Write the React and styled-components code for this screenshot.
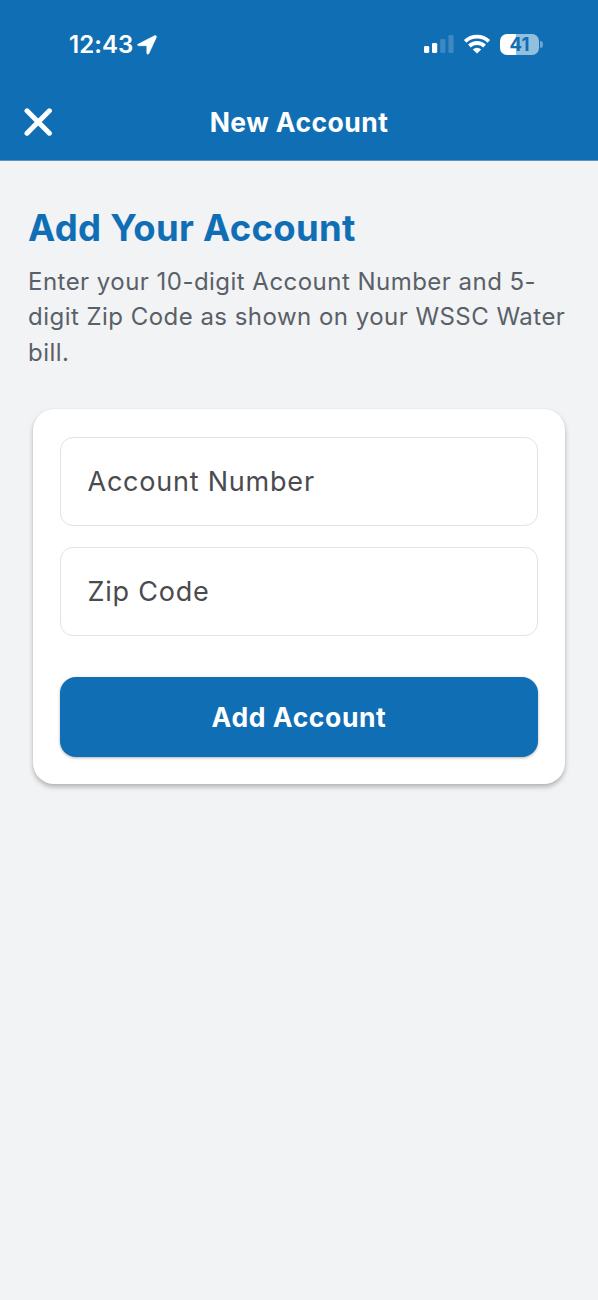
import React from "react";
import styled, { createGlobalStyle } from "styled-components";

const blue = "#106fb4";

const GlobalStyle = createGlobalStyle`
  * { box-sizing: border-box; }
  body { margin: 0; background: #f1f3f5; }
`;

const Screen = styled.div`
  display: flex;
  flex-direction: column;
  width: 598px;
  min-height: 1300px;
  background: #f1f3f5;
  font-family: Inter, "Liberation Sans", sans-serif;
`;

const Header = styled.header`
  height: 161px;
  background: ${blue};
  border-bottom: 1px solid #5b93bd;
  color: #fff;
`;

const StatusBar = styled.div`
  display: flex;
  align-items: center;
  justify-content: space-between;
  height: 84px;
  padding: 4px 55px 0 69px;
`;

const Clock = styled.div`
  display: flex;
  align-items: center;
  gap: 4px;
  padding-top: 2px;
  font-size: 24px;
  font-weight: 600;
  line-height: 30px;
  letter-spacing: 0.05px;
`;

const Indicators = styled.div`
  display: flex;
  align-items: center;
  gap: 9px;
`;

const Battery = styled.div`
  display: flex;
  align-items: center;
  gap: 1px;
`;

const BatteryBody = styled.div`
  display: flex;
  align-items: center;
  justify-content: center;
  width: 39px;
  height: 21px;
  border-radius: 7px;
  background: linear-gradient(to right, #fff 41%, #93bfdf 41%);
  color: ${blue};
  font-size: 18.5px;
  font-weight: 700;
  line-height: 21px;
`;

const BatteryTip = styled.div`
  width: 3px;
  height: 7px;
  border-radius: 0 3px 3px 0;
  background: #6ba5d1;
`;

const NavBar = styled.div`
  display: grid;
  grid-template-columns: 60px 1fr 60px;
  align-items: center;
  height: 76px;
`;

const CloseButton = styled.button`
  display: flex;
  margin: 0;
  padding: 0 0 0 24px;
  border: 0;
  background: none;
`;

const Title = styled.h1`
  margin: 0;
  font-size: 26.5px;
  font-weight: 700;
  line-height: 34px;
  letter-spacing: 0.45px;
  text-align: center;
`;

const Content = styled.main`
  padding: 44px 28px 0;
`;

const Heading = styled.h2`
  margin: 0;
  color: ${blue};
  font-size: 36.5px;
  font-weight: 700;
  line-height: 46px;
  letter-spacing: 0.3px;
`;

const Intro = styled.p`
  margin: 13px 0 0;
  color: #5a6068;
  font-size: 24px;
  font-weight: 400;
  line-height: 35.3px;
  letter-spacing: 0.47px;
`;

const Card = styled.form`
  display: flex;
  flex-direction: column;
  margin: 39px 5px 0;
  height: 375px;
  padding: 28px 27px 0;
  border-radius: 21px;
  background: #fff;
  box-shadow: 0 3px 5px rgba(0, 0, 0, 0.26), 0 0 2px rgba(0, 0, 0, 0.06);
`;

const Field = styled.label`
  display: flex;
  align-items: center;
  height: 89px;
  margin-bottom: 21px;
  padding-left: 26.5px;
  border: 1px solid #e2e3e5;
  border-radius: 13px;
  color: #4a4b4f;
  font-size: 27px;
  font-weight: 400;
  letter-spacing: 0.78px;
`;

const SubmitButton = styled.button`
  height: 80px;
  margin-top: 20px;
  padding: 1px 0 0;
  border: 0;
  border-radius: 16px;
  background: ${blue};
  box-shadow: 0 1px 3px rgba(0, 0, 0, 0.3);
  color: #fff;
  font-family: inherit;
  font-size: 26.5px;
  font-weight: 700;
  letter-spacing: 0.6px;
`;

const LocationIcon = () => (
  <svg width="20" height="20" viewBox="0 0 20 20">
    <path d="M1.3 9.1 17.5.8c1.3-.6 2.3.3 1.8 1.6L12 18.3c-.6 1.3-2.2 1-2.2-.4v-6.6c0-.4-.2-.6-.6-.6H2c-1.6 0-2-1-.7-1.6z" fill="#fff" stroke="#fff" strokeWidth="0.6" />
  </svg>
);

const SignalIcon = () => (
  <svg width="30" height="20" viewBox="0 0 30 20">
    <rect x="0" y="12" width="5.2" height="7" rx="1.3" fill="#fff" />
    <rect x="8" y="9" width="5.2" height="10" rx="1.3" fill="#fff" />
    <rect x="16.2" y="5" width="5.2" height="14" rx="1.3" fill="#3f88c2" />
    <rect x="24.4" y="1" width="5.2" height="18" rx="1.3" fill="#3f88c2" />
  </svg>
);

const WifiIcon = () => (
  <svg width="28" height="20" viewBox="0 0 28 20" fill="none" stroke="#fff" strokeWidth="3.8">
    <path d="M2.2 7.3a17.2 17.2 0 0 1 23.6 0" />
    <path d="M6.4 12a11.1 11.1 0 0 1 15.2 0" />
    <path d="M9.8 15.4a6.2 6.2 0 0 1 8.4 0L14 19.6z" fill="#fff" stroke="none" />
  </svg>
);

const CloseIcon = () => (
  <svg width="29" height="29" viewBox="0 0 29 29" fill="none" stroke="#fff" strokeWidth="5" strokeLinecap="round">
    <path d="M3 2.8 25.4 25.2M25.4 2.8 3 25.2" />
  </svg>
);

export default function App() {
  return (
    <Screen>
      <GlobalStyle />
      <Header>
        <StatusBar>
          <Clock>
            <span>12:43</span>
            <LocationIcon />
          </Clock>
          <Indicators>
            <SignalIcon />
            <WifiIcon />
            <Battery>
              <BatteryBody>41</BatteryBody>
              <BatteryTip />
            </Battery>
          </Indicators>
        </StatusBar>
        <NavBar>
          <CloseButton type="button" aria-label="Close">
            <CloseIcon />
          </CloseButton>
          <Title>New Account</Title>
        </NavBar>
      </Header>
      <Content>
        <Heading>Add Your Account</Heading>
        <Intro>
          Enter your 10-digit Account Number and 5-digit Zip Code as shown on your WSSC Water bill.
        </Intro>
        <Card>
          <Field>Account Number</Field>
          <Field>Zip Code</Field>
          <SubmitButton type="button">Add Account</SubmitButton>
        </Card>
      </Content>
    </Screen>
  );
}
